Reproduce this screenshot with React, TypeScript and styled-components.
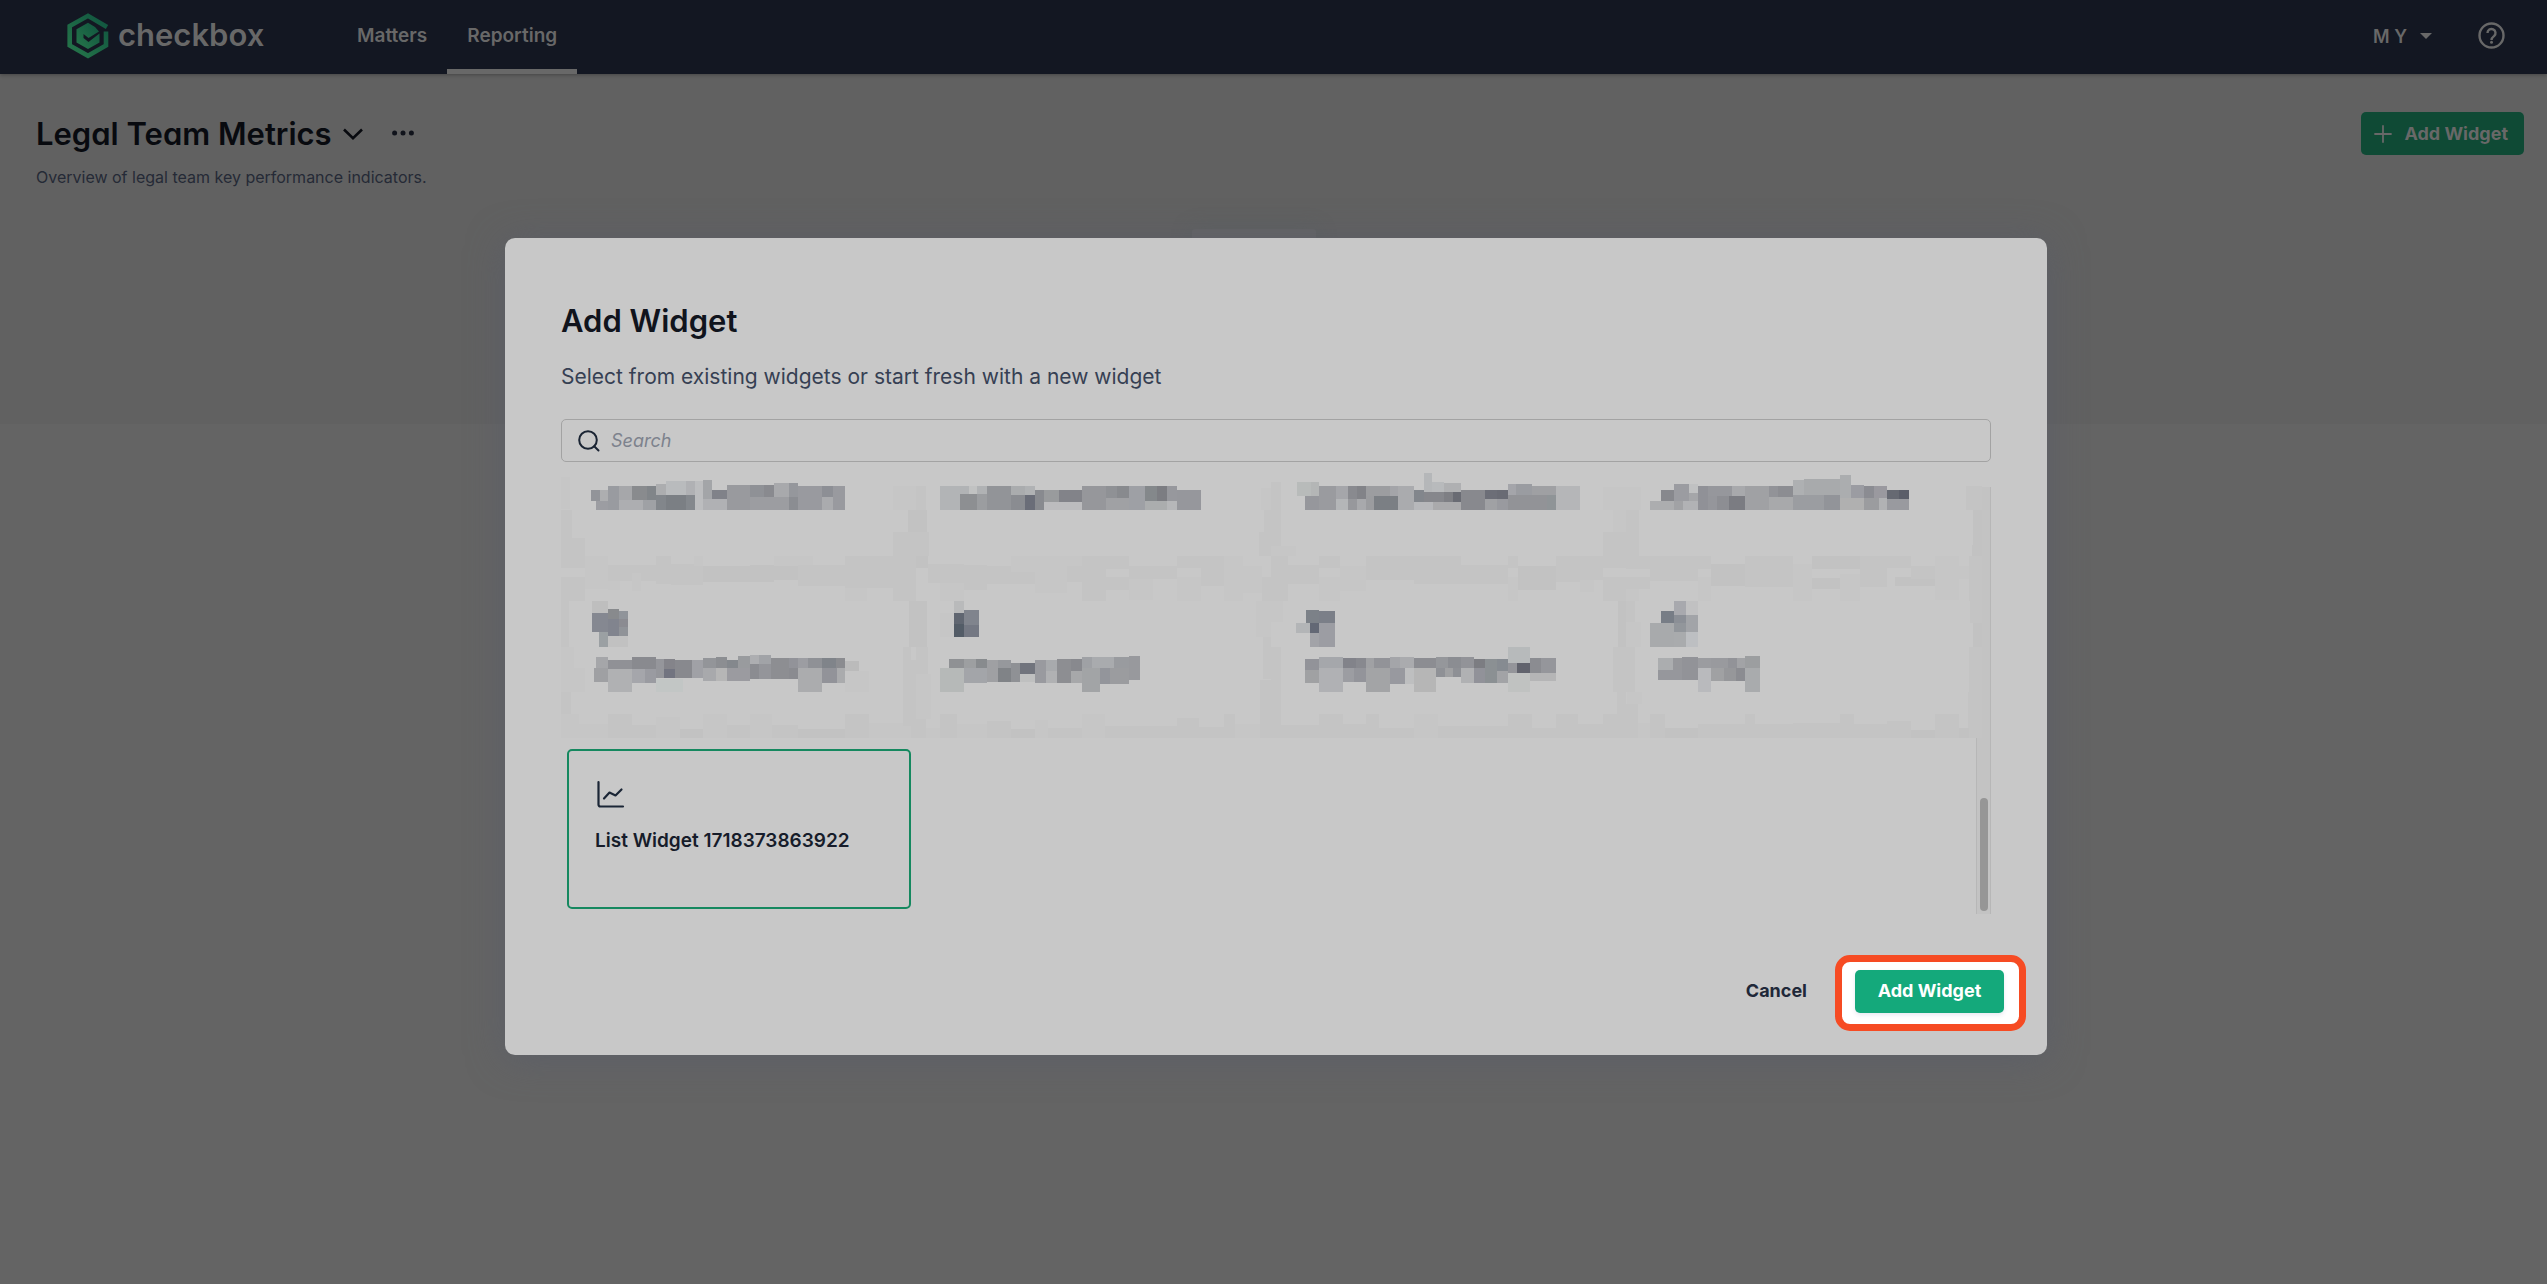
import React from "react";
import styled, { createGlobalStyle, css } from "styled-components";

const sans = `Inter, "Liberation Sans", sans-serif`;

const GlobalStyle = createGlobalStyle`
  *, *::before, *::after { box-sizing: border-box; }
  body { margin: 0; background: #646464; font-family: ${sans}; color: #10141d; }
  h1, h2, h3, p { margin: 0; }
  button, input { font: inherit; color: inherit; }
`;

const Page = styled.div`
  min-height: 100vh;
  display: flex;
  flex-direction: column;
`;

const Header = styled.header`
  display: flex;
  align-items: center;
  height: 74px;
  padding: 0 42px 0 67px;
  background: #131722;
  color: #686868;
  box-shadow: 0 1px 4px rgba(0, 0, 0, 0.3);
  position: relative;
`;

const Brand = styled.a`
  display: flex;
  align-items: center;
  gap: 9px;
  width: 290px;
  padding-bottom: 5px;
  color: inherit;
  font-size: 31px;
  font-weight: 600;
  line-height: 40px;
  text-decoration: none;
`;

const Nav = styled.nav`
  display: flex;
  align-self: stretch;
  flex: 1;
`;

const NavLink = styled.a<{ $active?: boolean }>`
  display: flex;
  align-items: center;
  padding: 0 20px;
  border-top: 2px solid transparent;
  border-bottom: 5px solid ${(p) => (p.$active ? "#686868" : "transparent")};
  margin-left: ${(p) => (p.$active ? "0" : "-20px")};
  color: inherit;
  font-size: 19px;
  font-weight: 600;
  text-decoration: none;
`;

const PlainButton = styled.button`
  display: inline-flex;
  align-items: center;
  padding: 0;
  border: 0;
  background: none;
`;

const AccountButton = styled(PlainButton)`
  gap: 13px;
  margin-right: 46px;
  padding-bottom: 2px;
  font-size: 18px;
  font-weight: 600;
`;

const Dashboard = styled.main`
  display: flex;
  flex-direction: column;
  height: 350px;
  padding: 38px 23px 0 36px;
  background: #616161;
`;

const TitleBar = styled.div`
  display: flex;
  align-items: center;
  justify-content: space-between;
`;

const TitleGroup = styled.div`
  display: flex;
  align-items: center;
`;

const headingFont = css`
  font-size: 31px;
  font-weight: 600;
  line-height: 40px;
  font-feature-settings: "cv11";
`;

const PageTitle = styled.h1`
  ${headingFont}
  color: #080a0f;
  margin-right: 11px;
`;

const MoreButton = styled(PlainButton)`
  margin-left: 29px;
`;

const Description = styled.p`
  margin-top: 10px;
  color: #252a36;
  font-size: 16px;
  line-height: 24px;
`;

const primaryButton = css`
  display: inline-flex;
  align-items: center;
  justify-content: center;
  height: 43px;
  border: 0;
  border-radius: 5px;
  font-size: 18px;
  font-weight: 700;
`;

const HeaderAddButton = styled.button`
  ${primaryButton}
  gap: 12px;
  padding: 0 16px 0 13px;
  background: #0f4a35;
  color: #686868;
`;

const EmptyPanel = styled.div`
  align-self: center;
  width: 124px;
  height: 60px;
  margin: 40px 53px 0 0;
  border-radius: 3px;
  background: #646465;
  box-shadow: 0 0 20px rgba(84, 94, 94, 0.4);
`;

const Overlay = styled.div`
  position: absolute;
  inset: 0;
  display: flex;
  justify-content: center;
  align-items: flex-start;
  padding: 238px 40px 40px 45px;
`;

const Dialog = styled.section`
  width: 100%;
  max-width: 1542px;
  padding: 63px 56px 24px;
  border-radius: 10px;
  background: #c8c8c8;
  box-shadow: 0 4px 36px rgba(88, 92, 106, 0.7);
`;

const DialogTitle = styled.h2`
  ${headingFont}
`;

const DialogText = styled.p`
  margin-top: 20px;
  color: #364053;
  font-size: 21px;
  line-height: 32px;
`;

const SearchBox = styled.label`
  display: flex;
  align-items: center;
  gap: 11px;
  height: 43px;
  margin-top: 26px;
  padding: 0 16px;
  border: 1px solid #a3a3a3;
  border-radius: 5px;
`;

const SearchInput = styled.input`
  flex: 1;
  min-width: 0;
  padding: 0;
  border: 0;
  outline: 0;
  background: none;
  font-size: 18px;
  font-style: italic;
  &::placeholder { color: #7d828d; opacity: 1; }
`;

const WidgetList = styled.div`
  position: relative;
  height: 437px;
  margin-top: 15px;
`;

const RedactedGrid = styled.div`
  position: relative;
  z-index: 1;
  display: grid;
  grid-template-columns: repeat(4, 1fr);
  margin-right: 10px;
`;

const Mosaic = styled.svg`
  display: block;
  width: 100%;
  height: 261px;
`;

const CardGrid = styled.div`
  display: grid;
  grid-template-columns: repeat(4, 1fr);
  gap: 9px;
  padding: 11px 21px 5px 6px;
`;

const WidgetCard = styled.button`
  display: flex;
  flex-direction: column;
  align-items: flex-start;
  gap: 20px;
  height: 160px;
  padding: 28px 26px;
  border: 2px solid #15885f;
  border-radius: 5px;
  background: none;
  color: #161c2a;
  font-size: 19px;
  font-weight: 600;
  line-height: 24px;
  text-align: left;
`;

const ScrollTrack = styled.div`
  position: absolute;
  top: 10px;
  right: 0;
  bottom: 0;
  display: flex;
  flex-direction: column;
  justify-content: flex-end;
  width: 15px;
  padding: 3px;
  border: solid #b7b7b7;
  border-width: 0 1px;
  background: #c3c3c3;
`;

const ScrollThumb = styled.div`
  width: 8px;
  height: 113px;
  border-radius: 4px;
  background: #969696;
`;

const Actions = styled.div`
  display: flex;
  align-items: center;
  justify-content: flex-end;
  gap: 28px;
  margin: 41px -35px 0 0;
`;

const CancelButton = styled(PlainButton)`
  padding-bottom: 6px;
  color: #1f2839;
  font-size: 18px;
  font-weight: 700;
`;

const Highlight = styled.div`
  padding: 8px 15px 11px 13px;
  border: 7px solid #f64b23;
  border-radius: 15px;
  background: #ffffff;
`;

const ConfirmButton = styled.button`
  ${primaryButton}
  display: flex;
  width: 149px;
  padding: 0 0 2px;
  background: #14a97b;
  color: #ffffff;
  box-shadow: 0 2px 4px rgba(60, 70, 140, 0.12);
`;

type Tile = [x1: number, y1: number, x2: number, y2: number, grey: string];

const f1 = "#c4c4c4";
const f2 = "#c2c2c2";
const f3 = "#c6c6c6";

const columns: { x: number; tiles: Tile[] }[] = [
  {
    x: 33,
    tiles: [
      [33, 54, 60, 150, f3], [33, 152, 66, 237, f1], [33, 237, 105, 326, f1], [105, 291, 174, 390, f3],
      [33, 354, 105, 426, f1], [174, 318, 318, 366, f1], [174, 366, 210, 394, f3], [246, 342, 272, 395, f3],
      [318, 291, 363, 374, f1], [363, 315, 459, 378, f1], [432, 291, 459, 320, f3], [459, 320, 672, 369, f2],
      [600, 318, 744, 363, f2], [672, 291, 790, 320, f3], [744, 318, 885, 380, f1], [885, 291, 1029, 387, f1],
      [885, 387, 951, 426, f3], [1029, 81, 1098, 152, f3], [1075, 152, 1098, 220, f2], [1029, 220, 1098, 426, f1],
      [1077, 426, 1098, 564, f2], [33, 426, 57, 564, f1], [33, 564, 72, 628, f3], [33, 628, 105, 699, f3],
      [33, 699, 63, 766, f1], [33, 766, 88, 837, f3], [88, 796, 174, 837, f3], [174, 766, 246, 837, f1],
      [246, 798, 318, 837, f1], [318, 774, 390, 837, f3], [390, 809, 459, 837, f2], [459, 766, 530, 837, f3],
      [530, 798, 600, 837, f1], [600, 766, 665, 837, f3], [665, 798, 744, 837, f1], [744, 809, 885, 837, f2],
      [885, 766, 957, 837, f1], [957, 792, 1098, 837, f3], [1058, 564, 1083, 800, f1], [1083, 602, 1098, 837, f1],
      [885, 636, 957, 699, f3], [318, 660, 400, 699, "#c2c6c5"],
      [123, 93, 150, 126, "#929499"], [150, 93, 174, 126, "#adaeb0"], [138, 126, 174, 153, "#9c9da2"],
      [174, 81, 207, 153, "#999ba0"], [207, 81, 246, 123, "#a6a7aa"], [207, 123, 279, 153, "#adaeb1"],
      [246, 81, 291, 123, "#898b8e"], [291, 81, 318, 123, "#818589"], [279, 123, 318, 153, "#9fa1a5"],
      [318, 75, 348, 108, "#acadaf"], [348, 66, 408, 108, "#b9bbbd"], [408, 66, 435, 108, "#b0b1b4"],
      [318, 108, 348, 153, "#82868b"], [348, 108, 408, 153, "#7b7f84"], [408, 108, 435, 153, "#84888d"],
      [435, 66, 459, 153, "#bcbdbf"], [459, 63, 486, 120, "#a3a5a8"], [486, 93, 531, 120, "#808289"],
      [459, 120, 531, 153, "#b0b1b4"], [531, 78, 600, 153, "#999a9e"], [600, 78, 642, 114, "#8f9196"],
      [642, 78, 672, 114, "#898a8f"], [672, 72, 717, 114, "#a8a9ac"], [600, 114, 717, 153, "#9c9da1"],
      [717, 72, 744, 114, "#95979c"], [717, 114, 744, 153, "#8b8d92"], [744, 81, 816, 153, "#999a9f"],
      [816, 81, 849, 114, "#8d8f95"], [816, 114, 849, 153, "#aaabae"], [849, 81, 885, 153, "#999a9f"],
      [126, 426, 174, 462, "#bebebe"], [126, 462, 174, 519, "#858891"], [174, 450, 207, 480, "#888a8d"],
      [174, 480, 207, 531, "#81848e"], [207, 456, 234, 480, "#90949a"], [207, 480, 234, 504, "#8b8b91"],
      [207, 504, 234, 531, "#909398"], [147, 519, 174, 564, "#9ba0a3"], [174, 531, 234, 564, "#c1c1c1"],
      [138, 594, 174, 627, "#a5a6a9"], [132, 627, 174, 669, "#9fa0a3"], [174, 603, 246, 630, "#909196"],
      [174, 630, 246, 699, "#b0b1b3"], [246, 594, 318, 630, "#898a8f"], [246, 630, 285, 672, "#a5a6ab"],
      [285, 630, 318, 672, "#9a9ba1"], [318, 600, 342, 657, "#95969b"], [342, 600, 375, 630, "#84848a"],
      [342, 630, 375, 657, "#727480"], [375, 603, 426, 657, "#88898e"], [426, 603, 459, 657, "#a0a1a6"],
      [459, 597, 498, 627, "#939599"], [459, 627, 498, 666, "#a8a9ac"], [498, 594, 531, 627, "#8c8e92"],
      [498, 627, 531, 666, "#b6b6b6"], [531, 603, 564, 627, "#84888d"], [564, 591, 600, 627, "#999b9e"],
      [531, 627, 600, 666, "#9b9ba0"], [600, 588, 627, 615, "#adaeb1"], [627, 588, 663, 615, "#a1a3a7"],
      [600, 615, 627, 660, "#8b8c91"], [627, 615, 663, 660, "#94959a"], [663, 597, 717, 660, "#8d8e92"],
      [717, 597, 744, 627, "#929399"], [717, 627, 744, 660, "#8a8b90"], [744, 597, 774, 627, "#9c9da2"],
      [774, 597, 816, 627, "#8f9196"], [816, 597, 858, 627, "#80848a"], [858, 597, 885, 627, "#8b8c90"],
      [744, 627, 816, 699, "#abacae"], [816, 627, 861, 672, "#929399"], [861, 627, 885, 672, "#aaabad"],
      [885, 606, 927, 636, "#bbbbbb"],
    ],
  },
  {
    x: 48,
    tiles: [
      [48, 81, 78, 152, f1], [48, 152, 81, 220, f2], [48, 220, 87, 291, f1], [48, 291, 84, 326, f2],
      [84, 315, 192, 372, f1], [120, 372, 192, 426, f3], [192, 318, 261, 393, f1], [261, 321, 405, 375, f1],
      [333, 291, 546, 340, f3], [405, 330, 501, 402, f3], [501, 320, 546, 370, f1], [546, 291, 618, 426, f1],
      [618, 291, 687, 330, f1], [618, 354, 687, 393, f1], [687, 321, 831, 360, f1], [687, 360, 760, 422, f3],
      [831, 291, 903, 326, f1], [831, 354, 903, 426, f3], [903, 291, 972, 380, f1], [972, 291, 1029, 426, f3],
      [1029, 321, 1086, 402, f3], [1083, 87, 1113, 152, f3], [1092, 152, 1113, 220, f1], [1077, 220, 1113, 291, f1],
      [1086, 354, 1113, 426, f1], [1068, 426, 1113, 534, f3], [1089, 534, 1113, 660, f1], [1080, 663, 1113, 837, f1],
      [48, 426, 81, 564, f2], [48, 564, 84, 645, f1], [48, 645, 93, 780, f3], [48, 780, 78, 837, f1],
      [78, 806, 120, 837, f3], [120, 766, 170, 837, f1], [170, 796, 261, 837, f3], [261, 786, 333, 837, f1],
      [333, 809, 405, 837, f2], [405, 784, 444, 837, f3], [444, 806, 546, 837, f1], [546, 766, 615, 837, f3],
      [615, 800, 831, 837, f1], [831, 776, 897, 837, f1], [897, 803, 972, 837, f1], [972, 766, 1005, 837, f1],
      [1005, 796, 1080, 837, f3], [120, 462, 162, 534, f3],
      [120, 81, 180, 153, "#b2b4b6"], [180, 81, 207, 105, "#b1b3b5"], [207, 81, 231, 105, "#c1c2c2"],
      [231, 81, 261, 105, "#b0b2b4"], [180, 105, 231, 153, "#8d8f92"], [231, 105, 261, 153, "#9b9da0"],
      [261, 81, 333, 153, "#929498"], [333, 81, 375, 108, "#aaacae"], [375, 81, 405, 108, "#b0b2b4"],
      [333, 108, 375, 153, "#8a8c91"], [375, 108, 405, 153, "#6a6d78"], [405, 93, 432, 153, "#888a8f"],
      [432, 93, 477, 129, "#999b9d"], [477, 93, 546, 129, "#828389"], [432, 129, 546, 153, "#bcbcbe"],
      [546, 81, 618, 153, "#96979b"], [618, 81, 651, 117, "#8f9195"], [651, 81, 687, 117, "#888a8e"],
      [618, 117, 687, 153, "#a0a1a4"], [687, 81, 735, 153, "#9ea0a5"], [735, 81, 771, 126, "#84888b"],
      [771, 81, 801, 126, "#7c7d82"], [735, 126, 801, 153, "#abadae"], [801, 81, 831, 126, "#97989d"],
      [801, 126, 831, 153, "#b6b7b9"], [831, 93, 903, 153, "#96979c"],
      [162, 426, 192, 462, "#b9babb"], [162, 462, 192, 495, "#606671"], [162, 495, 192, 534, "#535c67"],
      [192, 453, 237, 498, "#80848d"], [192, 498, 237, 534, "#747883"],
      [147, 600, 192, 627, "#8f9194"], [192, 600, 228, 627, "#9d9fa1"], [228, 600, 261, 627, "#888b8e"],
      [120, 627, 192, 699, "#b6b9b8"], [192, 627, 261, 672, "#a3a5a9"], [261, 603, 294, 669, "#9fa0a3"],
      [294, 603, 333, 627, "#96989c"], [294, 627, 333, 669, "#808387"], [333, 612, 360, 669, "#8f9195"],
      [360, 612, 405, 645, "#71747d"], [360, 645, 405, 669, "#bfc0c0"], [405, 603, 438, 672, "#999a9f"],
      [438, 603, 471, 636, "#a8aaad"], [438, 636, 471, 672, "#b0b1b3"], [471, 600, 513, 672, "#8d8e92"],
      [513, 600, 546, 636, "#88898e"], [513, 636, 546, 672, "#a7a8aa"], [546, 594, 576, 627, "#9fa1a5"],
      [576, 594, 642, 627, "#a9abae"], [546, 627, 600, 699, "#a2a4a6"], [642, 594, 687, 627, "#999b9f"],
      [600, 627, 630, 675, "#93959b"], [630, 627, 687, 675, "#9b9c9f"], [687, 591, 720, 663, "#98999d"],
    ],
  },
  {
    x: 3,
    tiles: [
      [3, 69, 33, 260, f1], [3, 260, 78, 291, f3], [3, 291, 54, 426, f1], [54, 318, 147, 375, f1],
      [147, 291, 210, 326, f1], [147, 354, 210, 426, f3], [210, 321, 288, 395, f3], [288, 291, 432, 363, f1],
      [432, 291, 573, 375, f1], [573, 318, 714, 375, f1], [714, 291, 744, 326, f1], [714, 354, 744, 426, f3],
      [744, 321, 858, 393, f2], [858, 291, 930, 370, f1], [930, 291, 999, 363, f1], [930, 363, 972, 399, f3],
      [999, 85, 1068, 152, f3], [1029, 152, 1068, 220, f3], [999, 220, 1068, 326, f1], [999, 354, 1068, 426, f1],
      [1044, 426, 1068, 564, f2], [1029, 564, 1068, 699, f1], [1041, 699, 1068, 837, f1],
      [3, 426, 39, 490, f3], [3, 564, 33, 837, f1], [33, 798, 147, 837, f1], [147, 766, 219, 837, f1],
      [219, 796, 288, 837, f1], [288, 766, 328, 837, f1], [328, 806, 432, 837, f1], [432, 766, 504, 837, f3],
      [504, 800, 714, 837, f1], [714, 766, 786, 837, f1], [786, 806, 858, 837, f1], [858, 766, 924, 837, f1],
      [924, 796, 999, 837, f1], [999, 766, 1041, 837, f1],
      [81, 69, 123, 111, "#b8bbba"], [123, 69, 147, 111, "#b4b6b6"], [105, 111, 147, 153, "#96979c"],
      [147, 81, 198, 153, "#9a9b9f"], [198, 81, 234, 120, "#a5a6aa"], [198, 120, 234, 153, "#b4b6b8"],
      [234, 81, 261, 120, "#898a8f"], [261, 81, 288, 120, "#828388"], [234, 120, 261, 153, "#97989c"],
      [261, 120, 288, 153, "#a8a9ac"], [288, 81, 360, 111, "#9c9da0"], [288, 111, 312, 153, "#9b9c9f"],
      [312, 111, 384, 153, "#7b7f84"], [360, 81, 384, 111, "#a4a5a9"], [384, 81, 432, 153, "#aaabae"],
      [432, 93, 462, 129, "#82868c"], [462, 42, 486, 99, "#b5b7b9"], [486, 69, 522, 99, "#b8babc"],
      [522, 72, 573, 99, "#afb0b2"], [462, 99, 522, 129, "#86878c"], [522, 99, 549, 129, "#7e7f84"],
      [549, 99, 573, 129, "#696b73"], [432, 129, 489, 153, "#b7b8bb"], [489, 129, 573, 153, "#aaaaac"],
      [573, 93, 645, 153, "#88898e"], [645, 93, 681, 120, "#6c6e77"], [681, 93, 714, 120, "#696b74"],
      [645, 120, 681, 153, "#a0a1a4"], [681, 120, 714, 153, "#999a9f"], [714, 75, 738, 108, "#a4a5aa"],
      [738, 75, 786, 108, "#9a9ca1"], [786, 81, 858, 108, "#9fa0a3"], [714, 108, 831, 153, "#929397"],
      [831, 108, 858, 153, "#8f9497"], [858, 81, 930, 153, "#b5b6b8"],
      [108, 453, 147, 492, "#7c8188"], [147, 456, 195, 492, "#7b7f88"], [78, 492, 120, 522, "#b3b5b7"],
      [120, 492, 147, 522, "#636875"], [120, 522, 147, 564, "#a2a3a8"], [147, 492, 195, 564, "#9c9da3"],
      [105, 600, 147, 633, "#929399"], [105, 633, 147, 672, "#a0a1a3"], [147, 594, 219, 627, "#a5a7ab"],
      [147, 627, 219, 699, "#b0b1b4"], [219, 597, 258, 627, "#82838a"], [258, 597, 288, 627, "#88898f"],
      [219, 627, 252, 669, "#9c9da2"], [252, 627, 288, 669, "#93949a"], [288, 597, 312, 627, "#a0a1a4"],
      [312, 597, 360, 627, "#929398"], [288, 627, 360, 699, "#a3a4a6"], [360, 594, 390, 627, "#a4a5a9"],
      [390, 594, 432, 627, "#aaabae"], [360, 627, 405, 675, "#98999f"], [405, 627, 432, 675, "#bebfc0"],
      [432, 597, 498, 627, "#8c8d92"], [432, 627, 498, 699, "#b6b6b6"], [498, 594, 534, 627, "#95979b"],
      [534, 594, 573, 627, "#8b8d92"], [498, 627, 525, 654, "#8f9196"], [525, 627, 549, 654, "#a0a1a3"],
      [549, 627, 573, 654, "#8e9095"], [573, 594, 612, 627, "#929398"], [573, 627, 612, 672, "#b0b1b3"],
      [612, 600, 645, 627, "#7c7d82"], [612, 627, 645, 672, "#919299"], [645, 600, 681, 672, "#8b9093"],
      [681, 600, 714, 636, "#868b91"], [681, 636, 714, 672, "#a2a3a6"], [714, 564, 780, 612, "#b7babb"],
      [714, 612, 741, 642, "#94959a"], [741, 612, 780, 642, "#61636d"], [714, 642, 780, 699, "#c0c2c1"],
      [780, 597, 813, 642, "#8b8c91"], [813, 597, 858, 642, "#95969b"], [780, 642, 858, 666, "#b5b5b6"],
    ],
  },
  {
    x: 18,
    tiles: [
      [18, 85, 63, 152, f3], [18, 152, 57, 291, f1], [18, 291, 90, 330, f1], [18, 354, 90, 390, f1],
      [90, 291, 273, 330, f1], [90, 320, 234, 366, f1], [234, 354, 273, 426, f3], [273, 315, 375, 380, f2],
      [375, 291, 519, 384, f1], [519, 315, 576, 426, f3], [576, 291, 720, 330, f2], [576, 356, 660, 390, f2],
      [660, 345, 720, 426, f3], [720, 291, 801, 384, f1], [801, 291, 873, 326, f1], [824, 354, 945, 380, f2],
      [873, 321, 945, 360, f1], [945, 291, 1017, 422, f3], [1017, 321, 1050, 360, f3],
      [1038, 81, 1086, 153, f1], [1059, 153, 1086, 258, f2], [1056, 258, 1086, 291, f2], [1047, 291, 1086, 426, f1],
      [1050, 426, 1086, 492, f1], [1059, 492, 1086, 564, f2], [1047, 564, 1086, 700, f1], [1044, 700, 1086, 837, f1],
      [18, 390, 57, 426, f3], [18, 426, 45, 490, f1], [18, 490, 63, 564, f3], [18, 564, 45, 700, f1],
      [22, 700, 66, 736, f3], [18, 736, 54, 837, f1], [54, 792, 90, 837, f3], [90, 766, 136, 837, f1],
      [136, 806, 234, 837, f2], [234, 796, 375, 837, f1], [375, 766, 406, 837, f1], [406, 796, 519, 837, f1],
      [519, 792, 660, 837, f1], [660, 766, 703, 837, f1], [703, 796, 801, 837, f1], [801, 786, 873, 837, f1],
      [873, 812, 945, 837, f2], [945, 766, 1017, 837, f1], [1017, 806, 1047, 837, f2],
      [123, 93, 162, 126, "#87888d"], [90, 126, 162, 153, "#acadaf"], [162, 75, 207, 126, "#9b9ca1"],
      [207, 75, 234, 102, "#c0c1c2"], [207, 102, 234, 126, "#a5a6a9"], [162, 126, 189, 153, "#a1a2a5"],
      [189, 126, 234, 153, "#b1b2b5"], [234, 81, 264, 153, "#909197"], [264, 81, 336, 111, "#96979c"],
      [264, 111, 291, 153, "#95969b"], [291, 111, 327, 153, "#8d8e93"], [327, 111, 375, 153, "#7b7c82"],
      [336, 81, 375, 111, "#a8a9ac"], [375, 81, 447, 153, "#a0a1a4"], [447, 81, 474, 114, "#929398"],
      [474, 81, 519, 114, "#8c8d92"], [447, 114, 519, 153, "#a8a9ab"], [519, 63, 552, 108, "#aeb0b2"],
      [552, 60, 660, 108, "#a8aaac"], [519, 108, 612, 153, "#9b9da1"], [612, 108, 660, 153, "#929499"],
      [660, 48, 693, 117, "#abadaf"], [660, 117, 732, 153, "#b0b0b0"], [693, 78, 732, 117, "#9b9ca2"],
      [732, 81, 762, 117, "#8b8c92"], [762, 81, 801, 117, "#9a999f"], [732, 117, 777, 153, "#9b9c9f"],
      [777, 117, 801, 153, "#b1b2b4"], [801, 93, 837, 120, "#666972"], [837, 93, 867, 120, "#5b5e69"],
      [801, 120, 867, 153, "#999a9f"],
      [162, 426, 198, 468, "#a8a9ae"], [198, 426, 234, 468, "#c1c1c2"], [123, 456, 162, 492, "#777d86"],
      [162, 468, 198, 492, "#8b8f96"], [198, 468, 234, 519, "#a2a4a8"], [162, 492, 198, 519, "#92969b"],
      [90, 492, 162, 564, "#a8aaac"], [162, 519, 198, 564, "#a9abad"], [198, 519, 234, 564, "#bdbfc2"],
      [114, 597, 159, 633, "#abadaf"], [114, 633, 186, 663, "#96979c"], [159, 597, 186, 633, "#96979b"],
      [186, 594, 234, 663, "#929398"], [234, 597, 273, 627, "#9b9ca0"], [273, 597, 324, 627, "#999a9e"],
      [324, 597, 351, 627, "#929398"], [351, 597, 375, 627, "#a2a3a6"], [375, 591, 420, 627, "#9c9ea0"],
      [234, 627, 273, 699, "#b9babd"], [273, 627, 312, 666, "#a0a1a3"], [312, 627, 348, 666, "#96979a"],
      [348, 627, 375, 666, "#8b8c91"], [375, 627, 420, 699, "#a9abad"],
    ],
  },
];

const LogoMark = () => (
  <svg width="42" height="48" viewBox="0 0 42 48" aria-hidden="true">
    <defs>
      <linearGradient id="mark" x1="0" y1="1" x2="1" y2="0">
        <stop offset="0" stopColor="#26764a" />
        <stop offset="1" stopColor="#10543f" />
      </linearGradient>
    </defs>
    <path
      d="M40 16 L21 4.800 L2.700 15 V34.500 L21 44.800 L39 34.500 V20.500"
      fill="none"
      stroke="url(#mark)"
      strokeWidth="4.600"
    />
    <path d="M21 11.800 L28 16 L32 20.500 L21.500 27 L16.500 23 V27 L21.500 31 L32.500 22.500 V31.500 L21 38 L9.500 31.500 V18.200 Z" fill="url(#mark)" />
  </svg>
);

export default function App() {
  return (
    <Page>
      <GlobalStyle />
      <Header>
        <Brand href="#">
          <LogoMark />
          checkbox
        </Brand>
        <Nav>
          <NavLink href="#">Matters</NavLink>
          <NavLink href="#" $active>
            Reporting
          </NavLink>
        </Nav>
        <AccountButton type="button">
          M Y
          <svg width="12" height="6" viewBox="0 0 12 6" aria-hidden="true">
            <path d="M0 0H12L6 6Z" fill="currentColor" />
          </svg>
        </AccountButton>
        <PlainButton type="button" aria-label="Help">
          <svg width="27" height="31" viewBox="0 0 27 31" fill="none" stroke="currentColor" strokeWidth="2.400" aria-hidden="true">
            <circle cx="13.500" cy="13.500" r="12" />
            <path d="M9.500 11a4 4 0 1 1 6.600 3c-1.500 1.200-2.600 2-2.600 4" />
            <circle cx="13.500" cy="20.300" r="1.500" fill="currentColor" stroke="none" />
          </svg>
        </PlainButton>
      </Header>

      <Dashboard>
        <TitleBar>
          <TitleGroup>
            <PageTitle>Legal Team Metrics</PageTitle>
            <PlainButton type="button" aria-label="Switch dashboard">
              <svg width="20" height="12" viewBox="0 0 20 12" fill="none" stroke="#080a0f" strokeWidth="2.600" aria-hidden="true">
                <path d="M1 1.500L10 10.200L19 1.500" />
              </svg>
            </PlainButton>
            <MoreButton type="button" aria-label="More options">
              <svg width="22" height="8" viewBox="0 0 22 8" fill="#10131b" aria-hidden="true">
                <circle cx="2.600" cy="3" r="2.500" />
                <circle cx="11" cy="3" r="2.500" />
                <circle cx="19.400" cy="3" r="2.500" />
              </svg>
            </MoreButton>
          </TitleGroup>
          <HeaderAddButton type="button">
            <svg width="18" height="18" viewBox="0 0 18 18" stroke="currentColor" strokeWidth="1.800" strokeLinecap="round" aria-hidden="true">
              <path d="M9 1V17M1 9H17" />
            </svg>
            Add Widget
          </HeaderAddButton>
        </TitleBar>
        <Description>Overview of legal team key performance indicators.</Description>
        <EmptyPanel />
      </Dashboard>

      <Overlay>
        <Dialog role="dialog" aria-labelledby="dialog-title">
          <DialogTitle id="dialog-title">Add Widget</DialogTitle>
          <DialogText>Select from existing widgets or start fresh with a new widget</DialogText>
          <SearchBox>
            <svg width="22" height="22" viewBox="0 0 22 22" fill="none" stroke="#1a2433" strokeWidth="2" strokeLinecap="round" aria-hidden="true">
              <circle cx="10" cy="10" r="8.800" />
              <path d="M16.200 16.200L20.500 20.500" />
            </svg>
            <SearchInput type="search" placeholder="Search" aria-label="Search" />
          </SearchBox>

          <WidgetList>
            <ScrollTrack>
              <ScrollThumb />
            </ScrollTrack>
            <RedactedGrid>
              {columns.map((column) => (
                <Mosaic
                  key={column.x}
                  viewBox={`${column.x} 54 1065 783`}
                  preserveAspectRatio="none"
                  shapeRendering="crispEdges"
                  overflow="visible"
                  aria-hidden="true"
                >
                  {column.x === 18 ? <rect x="18" y="84" width="1041" height="753" fill="#c8c8c8" /> : null}
                  {column.tiles.map(([x1, y1, x2, y2, grey], i) => (
                    <rect key={i} x={x1} y={y1} width={x2 - x1} height={y2 - y1} fill={grey} />
                  ))}
                </Mosaic>
              ))}
            </RedactedGrid>
            <CardGrid>
              <WidgetCard type="button" aria-pressed="true">
                <svg width="30" height="30" viewBox="0 0 30 30" fill="none" stroke="#1b2636" strokeWidth="2.200" strokeLinecap="round" strokeLinejoin="round" aria-hidden="true">
                  <path d="M3.500 3V25.500a2 2 0 0 0 2 2H28" />
                  <path d="M9 19.500L14.500 13.500L20.500 16.500L26.500 10.500" />
                </svg>
                List Widget 1718373863922
              </WidgetCard>
            </CardGrid>
          </WidgetList>

          <Actions>
            <CancelButton type="button">Cancel</CancelButton>
            <Highlight>
              <ConfirmButton type="button">Add Widget</ConfirmButton>
            </Highlight>
          </Actions>
        </Dialog>
      </Overlay>
    </Page>
  );
}
